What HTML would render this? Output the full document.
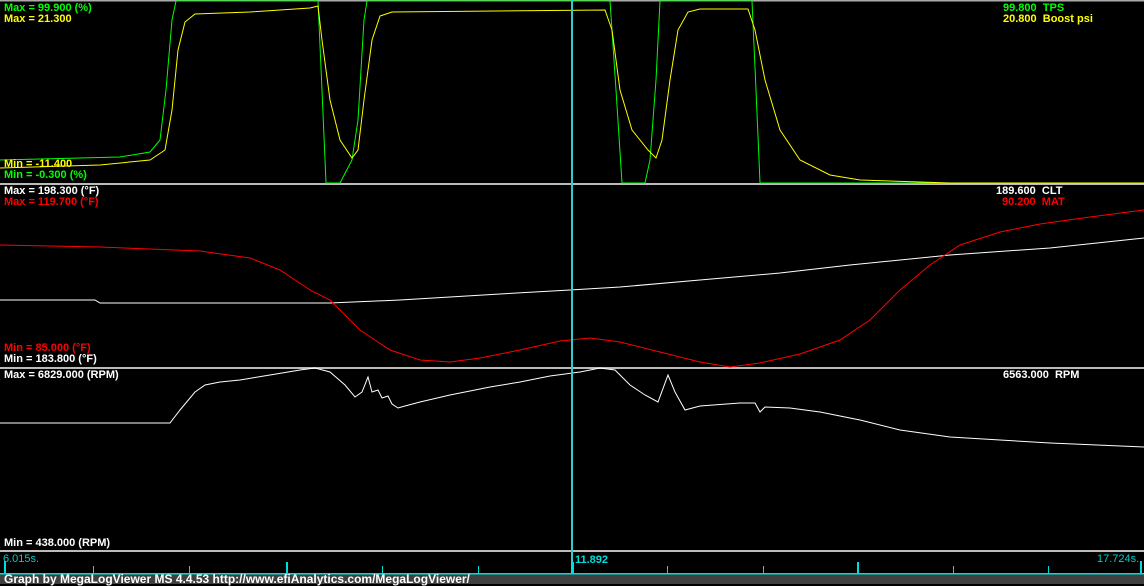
<!DOCTYPE html>
<html><head><style>
body{margin:0;background:#000;width:1144px;height:584px;overflow:hidden;position:relative;font-family:"Liberation Sans",Arial,sans-serif;font-weight:bold;font-size:11px}
.t{position:absolute;line-height:11px;white-space:pre}
svg{position:absolute;left:0;top:0}
</style></head><body>
<svg width="1144" height="584">
<rect x="0" y="0" width="1144" height="1.5" fill="#aaa"/>
<rect x="0" y="183" width="1144" height="2" fill="#bbb"/>
<rect x="0" y="367" width="1144" height="2" fill="#bbb"/>
<rect x="0" y="550" width="1144" height="2" fill="#bbb"/>
<polyline fill="none" stroke="#0f0" stroke-width="1" points="0,160 120,157 150,152 160,140 166,90 172,20 176,1 318,1 322,90 326,183 340,183 352,160 358,120 364,20 367,1 610,1 616,90 622,183 645,183 650,160 656,80 660,1 752,1 756,90 760,183 1144,183"/>
<polyline fill="none" stroke="#ff0" stroke-width="1" points="0,168 100,165 150,160 165,150 172,110 178,50 185,22 195,14 250,12 310,8 318,6 322,40 330,100 340,140 352,158 358,150 364,100 372,40 380,16 392,12 605,10 612,30 620,90 632,130 648,150 656,158 662,140 670,80 678,30 688,12 700,9 748,9 755,30 765,80 780,130 800,160 830,175 860,180 950,183 1144,183"/>
<polyline fill="none" stroke="#fff" stroke-width="1" points="0,300 95,300 100,303 330,303 400,300 450,297 500,294 570,290 620,287 700,280 780,273 850,265 950,255 1050,248 1144,238"/>
<polyline fill="none" stroke="#f00" stroke-width="1" points="0,245 100,247 200,251 250,258 280,270 310,290 330,300 360,330 390,350 420,360 450,362 480,358 520,350 560,341 590,338 620,342 660,352 700,362 730,367 760,363 800,354 840,340 870,320 900,290 930,265 960,245 1000,232 1040,224 1090,217 1144,210"/>
<polyline fill="none" stroke="#fff" stroke-width="1" points="0,423 170,423 180,410 195,392 205,385 220,382 240,380 270,375 300,370 315,368 330,372 345,385 355,397 362,392 368,377 372,392 378,390 382,398 388,396 392,404 398,408 405,406 420,402 450,395 490,387 520,382 550,376 580,372 600,368 615,370 630,385 645,395 658,402 668,375 675,392 685,410 700,406 740,403 755,403 760,412 765,407 790,408 820,412 860,420 900,430 950,437 1000,440 1050,443 1144,447"/>
<rect x="571" y="0" width="2" height="573" fill="#3cc"/>
<rect x="0" y="573" width="1144" height="1.5" fill="#0dd"/>
<g fill="#0dd">
<rect x="4" y="561" width="2" height="12"/><rect x="93" y="566" width="1" height="7"/><rect x="189" y="566" width="1" height="7"/><rect x="286" y="562" width="2" height="11"/><rect x="382" y="566" width="1" height="7"/><rect x="478" y="566" width="1" height="7"/><rect x="572" y="562" width="2" height="11"/><rect x="667" y="566" width="1" height="7"/><rect x="763" y="566" width="1" height="7"/><rect x="857" y="562" width="2" height="11"/><rect x="953" y="566" width="1" height="7"/><rect x="1048" y="566" width="1" height="7"/><rect x="1140" y="561" width="2" height="12"/>
</g>
<rect x="0" y="574.5" width="1144" height="10" fill="#404040"/>
</svg>
<div class="t" style="left:4px;top:3px;color:#0f0">Max = 99.900 (%)</div>
<div class="t" style="left:4px;top:14px;color:#ff0">Max = 21.300</div>
<div class="t" style="left:4px;top:159px;color:#ff0">Min = -11.400</div>
<div class="t" style="left:4px;top:170px;color:#0f0">Min = -0.300 (%)</div>
<div class="t" style="left:1003px;top:3px;color:#0f0">99.800  TPS</div>
<div class="t" style="left:1003px;top:14px;color:#ff0">20.800  Boost psi</div>
<div class="t" style="left:4px;top:186px;color:#fff">Max = 198.300 (°F)</div>
<div class="t" style="left:4px;top:197px;color:#f00">Max = 119.700 (°F)</div>
<div class="t" style="left:4px;top:343px;color:#f00">Min = 85.000 (°F)</div>
<div class="t" style="left:4px;top:354px;color:#fff">Min = 183.800 (°F)</div>
<div class="t" style="left:996px;top:186px;color:#fff">189.600  CLT</div>
<div class="t" style="left:1002px;top:197px;color:#f00">90.200  MAT</div>
<div class="t" style="left:4px;top:370px;color:#fff">Max = 6829.000 (RPM)</div>
<div class="t" style="left:4px;top:538px;color:#fff">Min = 438.000 (RPM)</div>
<div class="t" style="left:1003px;top:370px;color:#fff">6563.000  RPM</div>
<div class="t" style="left:3px;top:554px;color:#0cc;font-weight:normal">6.015s.</div>
<div class="t" style="left:575px;top:555px;color:#0dd">11.892</div>
<div class="t" style="left:1097px;top:554px;color:#0cc;font-weight:normal">17.724s.</div>
<div class="t" style="left:4px;top:573px;color:#fff;font-size:12px;line-height:12px">Graph by MegaLogViewer MS 4.4.53 http://www.efiAnalytics.com/MegaLogViewer/</div>
</body></html>
